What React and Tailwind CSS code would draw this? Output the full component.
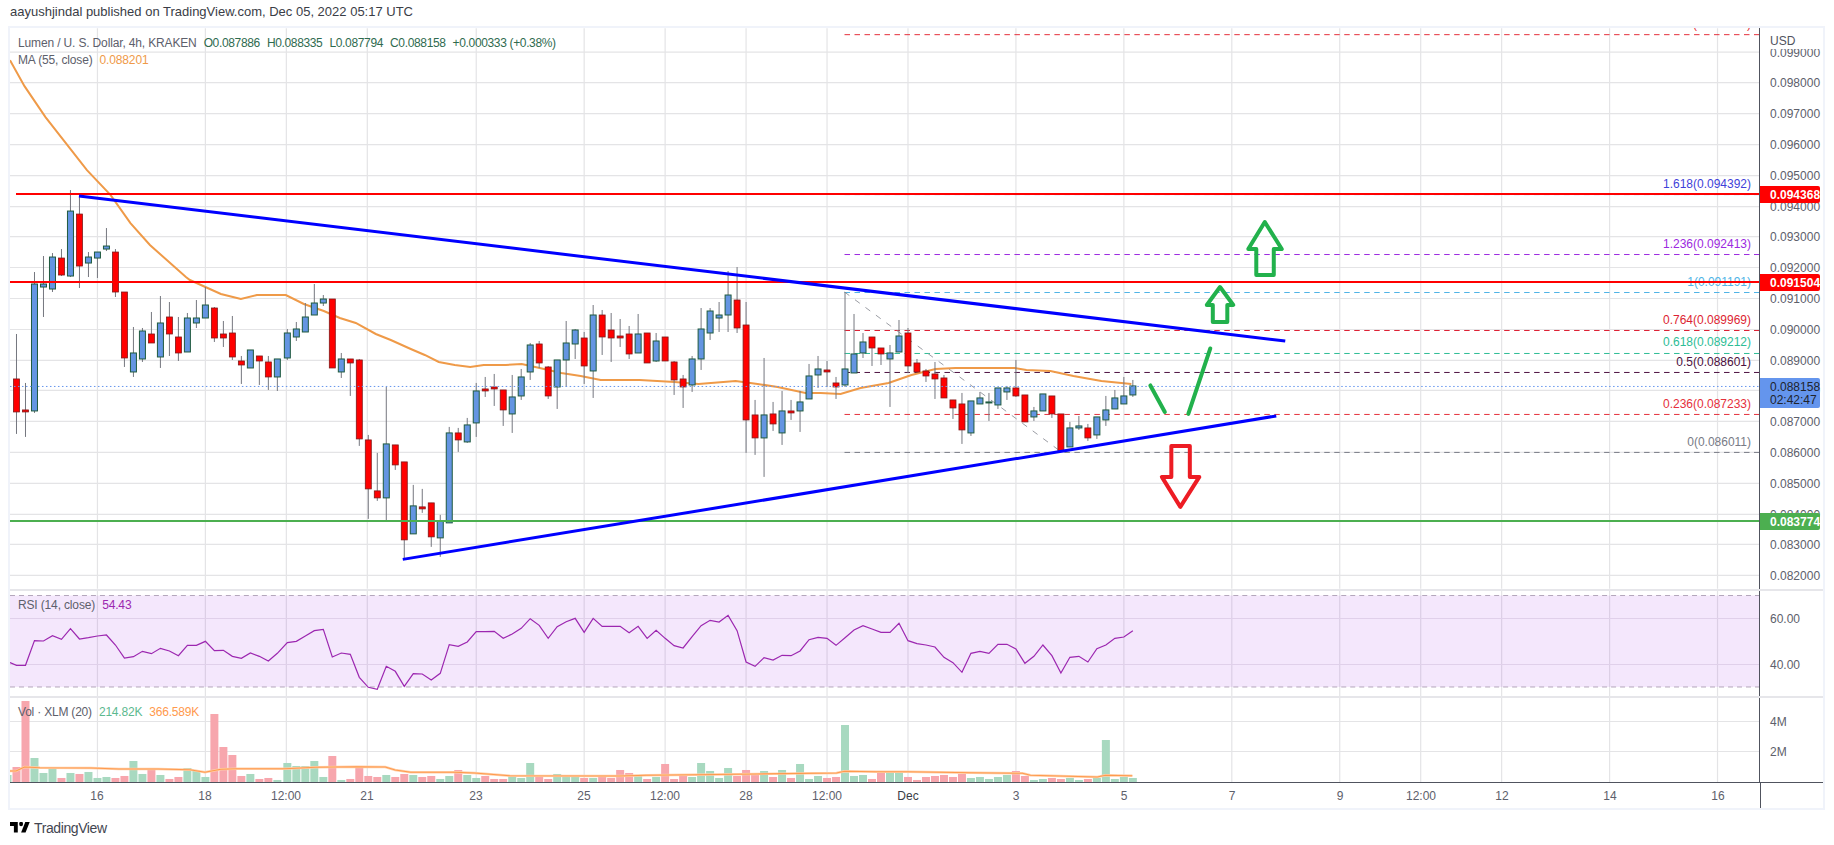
const FONT = "font-['Liberation_Sans',Arial,sans-serif]";

// [high, bodyTop, bodyBottom, low, isUp] in page pixels, one row per 4h bar
const CANDLES = [
  [334,379,412,434,0],[383,410,412,437,0],[272,284,411,413,1],[256,284,287,317,1],[253,257,289,292,1],
  [249,258,275,276,0],[190,211,276,277,1],[197,214,266,288,0],[252,257,263,277,1],[252,252,258,278,1],
  [228,246,249,251,1],[249,252,292,297,0],[292,292,358,367,0],[327,353,372,377,1],[328,331,359,362,1],
  [312,334,343,343,0],[296,323,357,368,1],[302,317,334,356,0],[317,337,353,361,0],[313,318,352,352,1],
  [300,318,323,328,1],[287,305,318,318,1],[307,308,338,342,0],[321,334,338,347,0],[316,333,357,360,0],
  [356,361,365,384,0],[350,350,368,368,1],[356,356,361,385,0],[356,362,377,390,0],[359,359,377,391,1],
  [329,333,358,360,1],[322,329,337,341,1],[303,317,332,332,1],[284,303,315,315,1],[295,299,303,306,1],
  [299,299,368,368,0],[353,359,372,378,1],[359,359,363,396,0],[359,360,439,446,0],[435,440,489,519,0],
  [453,491,498,501,0],[387,444,498,521,1],[445,445,465,470,0],[462,462,540,559,0],[485,506,534,534,1],
  [489,507,509,513,0],[503,503,537,547,0],[515,521,538,557,1],[427,433,523,523,1],[428,433,440,452,0],
  [418,425,442,443,1],[383,391,423,437,1],[377,389,391,397,0],[374,387,389,406,0],[390,390,410,426,0],
  [375,397,414,433,1],[369,377,396,400,1],[343,345,372,380,1],[341,344,363,368,0],[366,367,396,399,0],
  [360,360,387,409,1],[321,343,360,387,1],[329,330,344,359,1],[332,338,366,384,0],[305,315,371,398,1],
  [310,315,337,355,0],[313,330,338,362,0],[319,336,338,347,0],[326,334,354,359,0],[314,334,353,353,1],
  [333,333,363,363,0],[333,341,361,362,1],[337,337,361,361,0],[361,362,380,395,0],[375,379,387,408,0],
  [356,359,385,392,1],[308,329,359,370,1],[308,311,333,340,1],[302,315,318,332,1],[271,295,315,332,1],
  [267,300,328,333,0],[302,325,420,453,0],[400,415,438,455,0],[358,415,438,477,1],[402,414,424,431,0],
  [391,411,433,445,1],[400,411,413,420,0],[391,402,411,432,1],[364,376,399,399,1],[356,369,375,388,1],
  [361,370,372,387,0],[377,383,387,399,0],[292,369,385,387,1],[314,354,373,373,1],[333,342,353,358,1],
  [337,337,348,366,0],[348,348,354,365,0],[345,353,359,407,1],[320,336,352,352,1],[328,333,366,373,0],
  [359,363,372,372,0],[369,371,376,382,0],[362,374,379,399,0],[375,378,398,398,0],[400,400,408,419,0],
  [393,404,430,444,0],[401,401,433,436,1],[392,398,404,404,1],[393,402,403,421,1],[388,388,405,409,1],
  [386,388,392,400,1],[360,388,396,397,0],[395,395,422,422,0],[407,411,417,421,1],[394,394,411,411,1],
  [396,396,414,418,0],[414,414,451,451,0],[422,428,447,447,1],[416,426,428,430,1],[424,428,438,441,0],
  [417,417,435,439,1],[396,410,420,426,1],[390,398,409,409,1],[377,396,404,404,1],[380,386,395,397,1],
];

const MA_LINE = "10,60 24.5,86 45.5,117 69,147 87,170 110.7,195 130.5,223 150,245 186,277 190,280 221,294 241,299 257,295 269,295 286,295 304,304 324,311 340,318 356,323 376,334 391,340 411,349 425,355 439,362 455,365 470.5,367 484,365 506,365 522,364 540,368 561.5,373 581,376 601,380 640,380 675,382 699,384 736,381 758,384 778,387 806,393 821,393 841,394 861,388 889,383 912,375 936,369 956,368 1015,368 1027,370 1051,371 1074,376 1102,381 1132,384";

// y in the zoomed rsi strip, converted below
const RSI = [286,286,212,213,197,208,176,207,203,198,195,225,264,260,244,251,235,243,257,226,226,214,242,241,259,265,249,259,273,250,218,214,198,182,178,261,249,253,322,352,358,289,304,349,311,312,330,310,224,229,216,185,185,184,205,192,175,146,166,205,170,155,145,187,145,169,169,169,188,169,205,181,205,227,234,200,167,151,156,136,182,276,289,263,270,256,257,243,209,202,205,226,203,180,167,177,187,187,160,212,221,225,231,262,278,307,250,244,250,223,223,237,280,259,225,257,309,262,259,276,236,225,205,201,182];

const VOLUME = [591,393,564,609,597,624,609,612,606,624,621,624,618,573,612,594,615,627,621,594,603,621,432,531,555,618,612,627,624,630,579,588,588,573,621,558,630,627,588,618,621,615,621,612,615,621,618,627,618,600,615,624,618,627,627,618,624,579,621,627,612,618,621,624,624,618,624,600,609,618,627,621,582,627,615,621,579,603,624,594,618,600,615,603,621,600,624,582,627,618,624,621,465,618,615,627,603,609,606,621,630,621,618,615,621,612,624,621,627,621,615,603,618,630,627,624,627,624,630,627,624,510,627,621,624];

const VOL_MA = "10,771 16,771 24.5,767 40,767.7 91,768 119,769 158,769 190,769.7 205,772.3 221,769.3 237,768.7 285,768.7 316,767.3 356,766.7 385.5,767 395.4,770 411,772.3 455,772.3 474.5,773 510,775.7 620,776 647,775.3 695,774.7 758,774 837,773 845,771.3 877,771.7 908,771.7 972,772.7 1023,773.3 1031,775.3 1098,777 1106,775.3 1133,775.7";

const VERTICALS = [97.5,205.5,286.5,367.5,476.5,584.5,665.5,746.5,827.5,908.5,1016.5,1124.5,1232.5,1340.5,1421.5,1502.5,1610.5,1718.5];
const PRICE_ROWS = [
  ["0.099000",52],["0.098000",82.5],["0.097000",113.5],["0.096000",144.5],["0.095000",175.5],["0.094000",206.5],
  ["0.093000",236.5],["0.092000",267.5],["0.091000",298.5],["0.090000",329.5],["0.089000",360.5],["0.088000",390.5],
  ["0.087000",421.5],["0.086000",452.5],["0.085000",483.5],["0.084000",514.5],["0.083000",544.5],["0.082000",575.5],
];
const FIB_LEVELS = [
  ["2.618(0.097182)",34.5,"#e5303c",24],
  ["1.618(0.094392)",194.5,"#3f3fd9",184],
  ["1.236(0.092413)",254.5,"#9c2ae0",244],
  ["1(0.091191)",292.5,"#4fb4e6",282],
  ["0.764(0.089969)",330.5,"#dd1f32",320],
  ["0.618(0.089212)",353.5,"#2ebd96",342],
  ["0.5(0.088601)",372.5,"#4c1040",362],
  ["0.236(0.087233)",414.5,"#e5303c",404],
  ["0(0.086011)",452.5,"#787b86",442],
];
const TIME_LABELS = [
  ["16",97],["18",205],["12:00",286],["21",367],["23",476],["25",584],["12:00",665],["28",746],["12:00",827],
  ["Dec",908],["3",1016],["5",1124],["7",1232],["9",1340],["12:00",1421],["12",1502],["14",1610],["16",1718],
];

function barX(k) {
  return Math.round(16.2 + 9.01 * k);
}

function VerticalGrid({ top, bottom }) {
  return VERTICALS.map((x) => (
    <line key={x} x1={x} x2={x} y1={top} y2={bottom} stroke="#e4e4e6" strokeWidth="1.2" />
  ));
}

function Candle({ c, k }) {
  const [high, top, bottom, low, up] = c;
  const x = barX(k);
  return (
    <g>
      <line x1={x + 0.5} x2={x + 0.5} y1={high} y2={low} stroke="#74767e" />
      <rect
        x={x - 2.5}
        y={top}
        width="6"
        height={bottom - top}
        fill={up ? "#6495e2" : "#ff0000"}
        stroke={up ? "#1f5a3e" : "#7f1818"}
        strokeWidth={up ? 1 : 0.8}
      />
    </g>
  );
}

function PriceChart() {
  return (
    <svg className="block w-[1750px] h-[561px]" viewBox="10 28 1750 561">
      <VerticalGrid top={28} bottom={589} />
      {PRICE_ROWS.map(([label, y]) => (
        <line key={label} x1="10" x2="1760" y1={y} y2={y} stroke="#e4e4e6" strokeWidth="1.2" />
      ))}
      {FIB_LEVELS.map(([label, y, color, textY]) => (
        <g key={label}>
          <line x1="845" x2="1760" y1={y} y2={y} stroke={color} strokeDasharray="5.5 4.5" />
          <text x="1752" y={textY + 4} textAnchor="end" fill={color} fontSize="12">{label}</text>
        </g>
      ))}
      <line x1="845" y1="292" x2="1060.5" y2="451" stroke="#9a9ca3" strokeDasharray="6 7" />
      <polyline points={MA_LINE} fill="none" stroke="#ef9a48" strokeWidth="2" />
      {CANDLES.map((c, k) => <Candle key={k} c={c} k={k} />)}
      <line x1="10" x2="1760" y1="386.5" y2="386.5" stroke="#6495ed" strokeDasharray="1.5 2.5" />
      <line x1="16" x2="1760" y1="194" y2="194" stroke="#ff0000" strokeWidth="2" />
      <line x1="10" x2="1760" y1="282" y2="282" stroke="#ff0000" strokeWidth="2" />
      <line x1="10" x2="1760" y1="521" y2="521" stroke="#4caf50" strokeWidth="2" />
      <line x1="79" y1="196" x2="1286" y2="341" stroke="#0000ff" strokeWidth="3" />
      <line x1="403" y1="559.5" x2="1277" y2="416" stroke="#0000ff" strokeWidth="3" />
      {/* hand drawn arrows */}
      <polygon points="1265.5,222 1282.5,249 1274.5,249 1274.5,275 1257,275 1257,249 1249,249" fill="none" stroke="#22b14c" strokeWidth="4" strokeLinejoin="round" />
      <polygon points="1220.7,287 1234,305 1228,305 1228,322 1213.5,322 1213.5,305 1207.5,305" fill="none" stroke="#22b14c" strokeWidth="4" strokeLinejoin="round" />
      <polygon points="1172,446 1190.5,446 1190.5,477 1200,477 1181,507 1162.5,477 1172,477" fill="none" stroke="#ed1c24" strokeWidth="4" strokeLinejoin="round" />
      <line x1="1151" y1="385.5" x2="1165.5" y2="412" stroke="#22b14c" strokeWidth="4" strokeLinecap="round" />
      <line x1="1189" y1="414" x2="1211" y2="348.5" stroke="#22b14c" strokeWidth="4" strokeLinecap="round" />
    </svg>
  );
}

function PriceTag({ y, h, fill, lines, color }) {
  return (
    <g>
      <path d={`M1760 ${y}h58a2 2 0 0 1 2 2v${h - 4}a2 2 0 0 1 -2 2h-58z`} fill={fill} />
      {lines.map((t, i) => (
        <text key={t} x="1770" y={y + 12.5 + i * 13.5} fill={color} fontSize="12" fontWeight={color === "#fff" ? 700 : 400}>{t}</text>
      ))}
    </g>
  );
}

function PriceAxis() {
  return (
    <svg className="block w-[63px] h-[561px]" viewBox="1760 28 63 561">
      {PRICE_ROWS.map(([label, y]) => (
        <text key={label} x="1770" y={y + 4.5} fill="#5d606b" fontSize="12">{label}</text>
      ))}
      <rect x="1761" y="28" width="62" height="21" fill="#fff" />
      <text x="1770" y="45" fill="#50535e" fontSize="12">USD</text>
      <PriceTag y={186} h={17} fill="#ff0000" color="#fff" lines={["0.094368"]} />
      <PriceTag y={274} h={17} fill="#ff0000" color="#fff" lines={["0.091504"]} />
      <PriceTag y={378} h={30} fill="#6495ed" color="#20242c" lines={["0.088158", "02:42:47"]} />
      <PriceTag y={513} h={17} fill="#4caf50" color="#fff" lines={["0.083774"]} />
    </svg>
  );
}

function RsiChart() {
  const points = RSI.map((z, k) => `${barX(k) + 0.5},${570 + z / 3}`).join(" ");
  return (
    <svg className="block w-[1750px] h-[105px]" viewBox="10 591 1750 105">
      <VerticalGrid top={591} bottom={696} />
      <rect x="10" y="595.5" width="1750" height="91.5" fill="#9c27e0" fillOpacity="0.11" />
      <line x1="10" x2="1760" y1="595.5" y2="595.5" stroke="#b3a6bb" strokeDasharray="5 4" />
      <line x1="10" x2="1760" y1="687" y2="687" stroke="#b3a6bb" strokeDasharray="5 4" />
      <line x1="10" x2="1760" y1="618.5" y2="618.5" stroke="#e0d0ea" strokeWidth="1.2" />
      <line x1="10" x2="1760" y1="664.5" y2="664.5" stroke="#e0d0ea" strokeWidth="1.2" />
      <polyline points={`10,662.5 ${points}`} fill="none" stroke="#9c27b0" strokeWidth="1.2" />
    </svg>
  );
}

function VolumeChart() {
  return (
    <svg className="block w-[1750px] h-[84px]" viewBox="10 698 1750 84">
      <VerticalGrid top={698} bottom={782} />
      <line x1="10" x2="1760" y1="721.5" y2="721.5" stroke="#e4e4e6" strokeWidth="1.2" />
      <line x1="10" x2="1760" y1="751.5" y2="751.5" stroke="#e4e4e6" strokeWidth="1.2" />
      <rect x="10" y="775" width="1.5" height="7" fill="#a9dcc3" />
      {VOLUME.map((z, k) => {
        const top = 570 + z / 3;
        return (
          <rect
            key={k}
            x={barX(k) - 3.5}
            y={top}
            width="8"
            height={782 - top}
            fill={CANDLES[k][4] ? "#a8d9c0" : "#f7a6ad"}
          />
        );
      })}
      <polyline points={VOL_MA} fill="none" stroke="#ffcfa8" strokeWidth="2.4" />
      <polyline points={VOL_MA} fill="none" stroke="#ff9a4d" strokeWidth="1.1" />
    </svg>
  );
}

function AxisLabels({ rows, top, height }) {
  return (
    <svg className="block w-[63px]" style={{ height }} viewBox={`1760 ${top} 63 ${height}`}>
      {rows.map(([label, y]) => (
        <text key={label} x="1770" y={y + 4.5} fill="#5d606b" fontSize="12">{label}</text>
      ))}
    </svg>
  );
}

function TimeAxis() {
  return (
    <svg className="block w-[1750px] h-[26px]" viewBox="10 782 1750 26">
      {TIME_LABELS.map(([label, x], i) => (
        <text
          key={i}
          x={x}
          y="799"
          textAnchor="middle"
          fill={label === "Dec" ? "#3a3d46" : "#5d606b"}
          fontSize="12"
        >
          {label}
        </text>
      ))}
    </svg>
  );
}

export default function App() {
  return (
    <div className={`flex h-[845px] w-[1834px] flex-col overflow-hidden bg-white ${FONT}`}>
      <div className="flex h-[26px] items-center pb-[4px] pl-[10px] text-[13px] leading-none text-[#3a3d46]">
        aayushjindal published on TradingView.com, Dec 05, 2022 05:17 UTC
      </div>

      <div className="ml-[8px] w-[1817px] border-2 border-[#f0f3fa]">
        <div className="relative flex h-[561px]">
          <PriceChart />
          <div className="border-l border-[#50535e]"><PriceAxis /></div>
          <div className="absolute left-[8px] top-[7px] flex h-[15px] items-center gap-[7px] text-[12px] leading-none tracking-[-0.15px] text-[#5d606b]">
            <span>Lumen / U. S. Dollar, 4h, KRAKEN</span>
            <span className="tracking-[-0.35px] text-[#2f6b4f]">O0.087886</span>
            <span className="tracking-[-0.35px] text-[#2f6b4f]">H0.088335</span>
            <span className="tracking-[-0.35px] text-[#2f6b4f]">L0.087794</span>
            <span className="tracking-[-0.35px] text-[#2f6b4f]">C0.088158</span>
            <span className="tracking-[-0.35px] text-[#2f6b4f]">+0.000333 (+0.38%)</span>
          </div>
          <div className="absolute left-[8px] top-[24px] flex h-[15px] items-center gap-[7px] text-[12px] leading-none tracking-[-0.15px] text-[#5d606b]">
            <span>MA (55, close)</span>
            <span className="text-[#ef9a48]">0.088201</span>
          </div>
        </div>

        <div className="relative flex h-[107px] border-t-2 border-[#e6e6ea]">
          <RsiChart />
          <div className="border-l border-[#50535e]">
            <AxisLabels rows={[["60.00", 618], ["40.00", 664]]} top={591} height={105} />
          </div>
          <div className="absolute left-[8px] top-[6px] flex h-[15px] items-center gap-[7px] text-[12px] leading-none tracking-[-0.15px] text-[#5d606b]">
            <span>RSI (14, close)</span>
            <span className="text-[#9c27b0]">54.43</span>
          </div>
        </div>

        <div className="relative flex h-[86px] border-t-2 border-[#e6e6ea]">
          <VolumeChart />
          <div className="border-l border-[#50535e]">
            <AxisLabels rows={[["4M", 721], ["2M", 751]]} top={698} height={84} />
          </div>
          <div className="absolute left-[8px] top-[6px] flex h-[15px] items-center gap-[7px] text-[12px] leading-none tracking-[-0.2px] text-[#5d606b]">
            <span>Vol · XLM (20)</span>
            <span className="text-[#5cb98f]">214.82K</span>
            <span className="text-[#ff9a4d]">366.589K</span>
          </div>
        </div>

        <div className="flex h-[26px] border-t border-[#50535e]">
          <TimeAxis />
          <div className="border-l border-[#50535e]" />
        </div>
      </div>

      <div className="flex flex-1 items-center gap-[4px] pl-[10px]">
        <svg className="h-[10.5px] w-[20px] text-black" viewBox="0 6 36 16" preserveAspectRatio="none">
          <path fill="currentColor" d="M14 6H0v6h7v10h7V6z" />
          <path fill="currentColor" d="M28 22h-8l7.5-16h8L28 22z" />
          <circle fill="currentColor" cx="20" cy="9" r="3.5" />
        </svg>
        <span className="text-[14px] leading-none tracking-[-0.4px] text-[#434651]">TradingView</span>
      </div>
    </div>
  );
}
